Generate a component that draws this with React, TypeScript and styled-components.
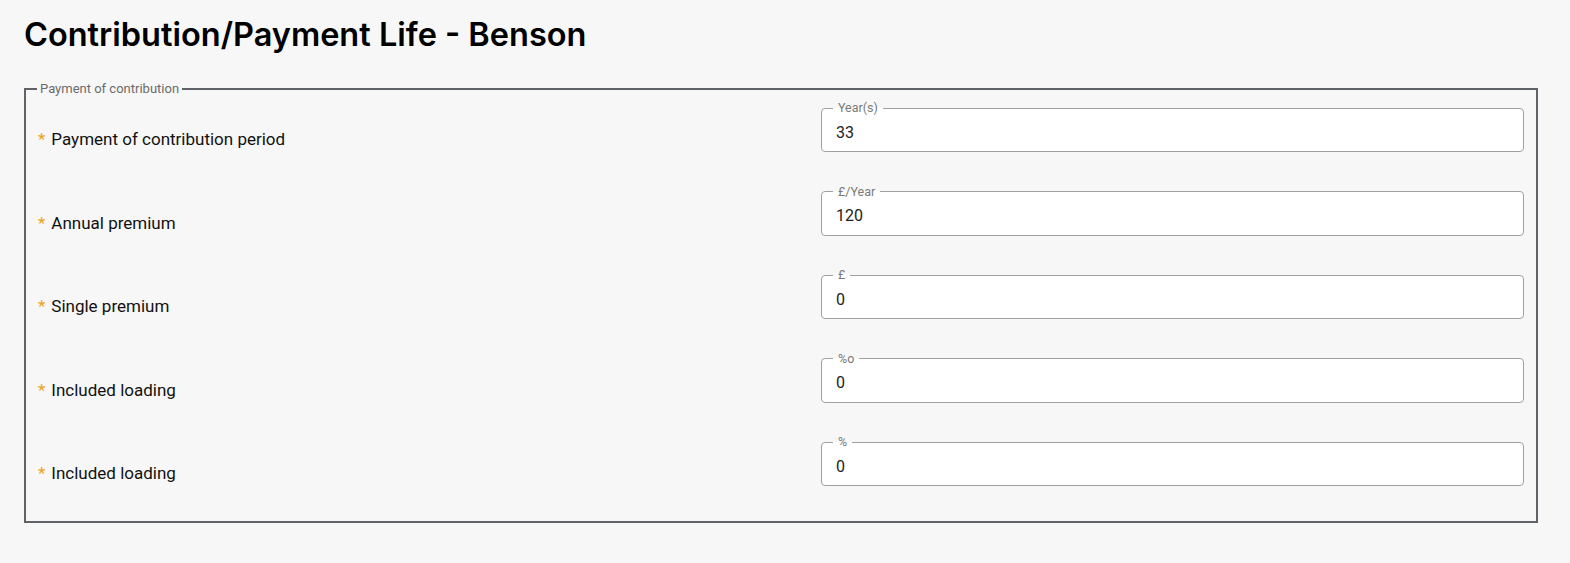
import styled, { createGlobalStyle } from "styled-components";

const GlobalStyle = createGlobalStyle`
  body {
    margin: 0;
    background-color: #f7f7f7;
    font-family: Roboto, "Liberation Sans", sans-serif;
    color: #111;
  }
`;

const Page = styled.div`
  padding: 13px 32px 40px 24px;
`;

const Title = styled.h1`
  margin: 0;
  font-family: Inter, "Open Sans", sans-serif;
  font-size: 32.5px;
  font-weight: 600;
  line-height: 44px;
  color: #000;
`;

const Section = styled.fieldset`
  margin: 25px 0 0;
  padding: 5px 12px 35px;
  border: 2px solid #5f6368;
  min-width: 0;
`;

const SectionLegend = styled.legend`
  margin-left: -1px;
  padding: 0 3px;
  font-size: 13px;
  line-height: 14px;
  color: #6b6b6b;
`;

const Rows = styled.div`
  display: flex;
  flex-direction: column;
  gap: 32.5px;
`;

const Row = styled.div`
  display: grid;
  grid-template-columns: 783px 1fr;
  align-items: end;
`;

const Label = styled.div`
  font-size: 17px;
  line-height: 20px;
  padding-bottom: 3px;
`;

const Required = styled.span`
  color: #f0a020;
  margin-right: 6px;
`;

const Field = styled.fieldset`
  margin: 0;
  padding: 0 14px 2px;
  border: 1px solid #a0a0a0;
  border-radius: 4px;
  background-color: #fff;
  min-width: 0;
`;

const Unit = styled.legend`
  margin-left: -3px;
  padding: 0 5px;
  font-size: 12.5px;
  line-height: 14px;
  color: #7a7a7a;
`;

const Input = styled.input`
  display: block;
  width: 100%;
  height: 34px;
  padding: 0;
  border: none;
  outline: none;
  background: transparent;
  font-family: Roboto, "Liberation Sans", sans-serif;
  font-size: 16px;
  color: #222;
`;

const fields = [
  { label: "Payment of contribution period", unit: "Year(s)", value: "33" },
  { label: "Annual premium", unit: "£/Year", value: "120" },
  { label: "Single premium", unit: "£", value: "0" },
  { label: "Included loading", unit: "%o", value: "0" },
  { label: "Included loading", unit: "%", value: "0" },
];

export default function App() {
  return (
    <>
      <GlobalStyle />
      <Page>
        <Title>Contribution/Payment Life - Benson</Title>
        <Section>
          <SectionLegend>Payment of contribution</SectionLegend>
          <Rows>
            {fields.map((f, i) => (
              <Row key={i}>
                <Label>
                  <Required>*</Required>
                  {f.label}
                </Label>
                <Field>
                  <Unit>{f.unit}</Unit>
                  <Input defaultValue={f.value} />
                </Field>
              </Row>
            ))}
          </Rows>
        </Section>
      </Page>
    </>
  );
}
